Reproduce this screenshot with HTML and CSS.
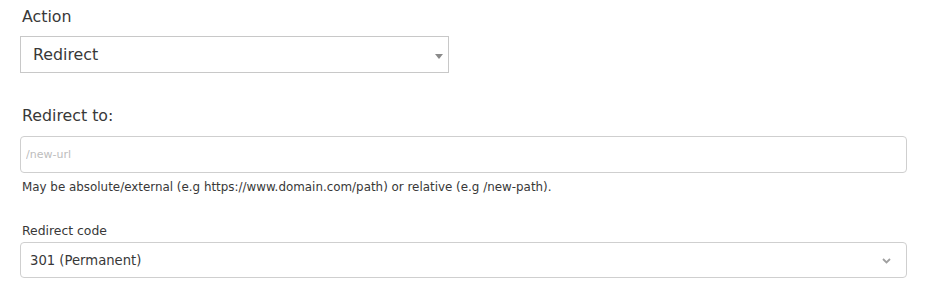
FILE: index.html
```html
<!DOCTYPE html>
<html lang="en">
<head>
<meta charset="utf-8">
<title>Redirect rule</title>
<link rel="stylesheet" href="styles.css">
</head>
<body>
<form class="form">
  <label class="label-lg label-action" for="action">Action</label>
  <div class="select-wrap select-wrap-action">
    <select id="action" class="select select-square">
      <option>Redirect</option>
    </select>
    <svg class="caret" width="8" height="5" viewBox="0 0 8 5" aria-hidden="true"><path d="M0 0H8L4 5Z" fill="#8a8a8a"/></svg>
  </div>

  <label class="label-lg label-to" for="to">Redirect to:</label>
  <input id="to" class="input" type="text" placeholder="/new-url">
  <p class="help">May be absolute/external (e.g https://www.domain.com/path) or relative (e.g /new-path).</p>

  <label class="label-sm" for="code">Redirect code</label>
  <div class="select-wrap">
    <select id="code" class="select select-round">
      <option>301 (Permanent)</option>
    </select>
    <svg class="chevron" width="9" height="6" viewBox="0 0 9 6" aria-hidden="true"><path d="M1 1L4.5 4.5L8 1" fill="none" stroke="#a0a0a0" stroke-width="1.8"/></svg>
  </div>
</form>
</body>
</html>
```
FILE: styles.css
```css
html, body {
  margin: 0;
  padding: 0;
  background: #fff;
}
body {
  font-family: "DejaVu Sans", "Noto Sans", sans-serif;
  color: #383838;
}
.form {
  display: flex;
  flex-direction: column;
  width: 887px;
  padding-left: 20px;
}
.label-lg {
  font-size: 15.8px;
  line-height: 22px;
  padding-left: 2px;
  color: #383838;
}
.label-action {
  margin-top: 6px;
  margin-bottom: 8px;
}
.label-to {
  margin-top: 32px;
  margin-bottom: 9px;
}
.select-wrap {
  position: relative;
}
.select-wrap-action {
  width: 429px;
}
.select {
  appearance: none;
  -webkit-appearance: none;
  width: 100%;
  margin: 0;
  background: #fff;
  color: #383838;
  font-family: inherit;
  outline: none;
}
.select-square {
  height: 37px;
  border: 1px solid #c8c8c8;
  border-radius: 0;
  padding: 0 12px;
  font-size: 15.8px;
}
.select-round {
  height: 36px;
  border: 1px solid #cfcfcf;
  border-radius: 4px;
  padding: 0 9px;
  font-size: 13.2px;
}
.caret {
  position: absolute;
  right: 6px;
  top: 18px;
}
.chevron {
  position: absolute;
  right: 16px;
  top: 16px;
}
.input {
  box-sizing: border-box;
  height: 37px;
  width: 100%;
  margin: 0;
  border: 1px solid #cfcfcf;
  border-radius: 4px;
  padding: 0 5px;
  font-family: inherit;
  font-size: 11px;
  color: #383838;
  outline: none;
}
.input::placeholder {
  color: #bdbdbd;
}
.help {
  margin: 6px 0 0 2px;
  font-size: 11.9px;
  line-height: 16px;
  color: #383838;
}
.label-sm {
  margin-top: 28px;
  margin-bottom: 3px;
  padding-left: 2px;
  font-size: 12.4px;
  line-height: 16px;
  color: #383838;
}
```
